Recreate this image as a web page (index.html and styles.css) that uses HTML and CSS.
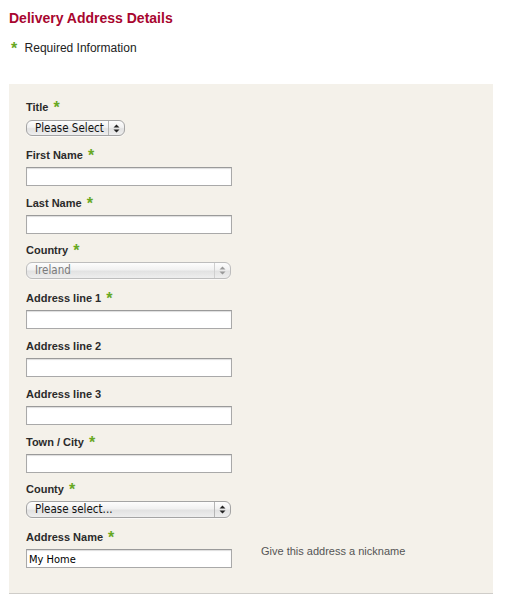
FILE: index.html
```html
<!DOCTYPE html>
<html>
<head>
<meta charset="utf-8">
<link rel="stylesheet" href="styles.css">
</head>
<body>
<div class="page">
  <h1 class="heading">Delivery Address Details</h1>
  <p class="required"><span class="star">*</span> Required Information</p>
  <form class="panel">
    <div class="field">
      <label class="label">Title <span class="star">*</span></label>
      <div class="select select-title">
        <span class="select-text">Please Select</span>
        <span class="select-arrow"><svg width="7" height="9" viewBox="0 0 7 9"><path d="M3.5 0.5 L6.5 3.5 L0.5 3.5 Z M3.5 8.5 L6.5 5.5 L0.5 5.5 Z" fill="#222"/></svg></span>
      </div>
    </div>
    <div class="field">
      <label class="label">First Name <span class="star">*</span></label>
      <input class="input" type="text">
    </div>
    <div class="field">
      <label class="label">Last Name <span class="star">*</span></label>
      <input class="input" type="text">
    </div>
    <div class="field">
      <label class="label">Country <span class="star">*</span></label>
      <div class="select select-wide disabled">
        <span class="select-text">Ireland</span>
        <span class="select-arrow"><svg width="7" height="9" viewBox="0 0 7 9"><path d="M3.5 0.5 L6.5 3.5 L0.5 3.5 Z M3.5 8.5 L6.5 5.5 L0.5 5.5 Z" fill="#999"/></svg></span>
      </div>
    </div>
    <div class="field">
      <label class="label">Address line 1 <span class="star">*</span></label>
      <input class="input" type="text">
    </div>
    <div class="field">
      <label class="label">Address line 2</label>
      <input class="input" type="text">
    </div>
    <div class="field">
      <label class="label">Address line 3</label>
      <input class="input" type="text">
    </div>
    <div class="field">
      <label class="label">Town / City <span class="star">*</span></label>
      <input class="input" type="text">
    </div>
    <div class="field">
      <label class="label">County <span class="star">*</span></label>
      <div class="select select-wide">
        <span class="select-text">Please select...</span>
        <span class="select-arrow"><svg width="7" height="9" viewBox="0 0 7 9"><path d="M3.5 0.5 L6.5 3.5 L0.5 3.5 Z M3.5 8.5 L6.5 5.5 L0.5 5.5 Z" fill="#222"/></svg></span>
      </div>
    </div>
    <div class="field field-row">
      <div class="field-main">
        <label class="label">Address Name <span class="star">*</span></label>
        <input class="input" type="text" value="My Home">
      </div>
      <span class="hint">Give this address a nickname</span>
    </div>
  </form>
</div>
</body>
</html>
```
FILE: styles.css
```css
* { box-sizing: border-box; }
html, body { margin: 0; padding: 0; background: #fff; }
body {
  font-family: "Liberation Sans", Arial, sans-serif;
  color: #222;
}
.page {
  padding: 10px 19px 0 9px;
}
.heading {
  margin: 0;
  font-size: 14px;
  line-height: 16px;
  font-weight: bold;
  color: #a8062f;
}
.required {
  margin: 15px 0 0 2px;
  font-size: 12px;
  line-height: 14px;
  color: #222;
}
.required .star { margin-right: 4px; }
.star {
  color: #67a823;
  font-weight: bold;
  font-size: 16px;
  line-height: 10px;
  vertical-align: -2px;
}
.panel {
  margin-top: 29px;
  background: #f4f1ea;
  border-bottom: 1px solid #cfcdc9;
  padding: 16px 0 15px 17px;
  display: grid;
  grid-auto-rows: 47.8px;
}
.field {
  display: flex;
  flex-direction: column;
  align-items: flex-start;
  gap: 5px;
}
.label {
  font-size: 11px;
  line-height: 14px;
  font-weight: bold;
  color: #2b2b2b;
}
.label .star { margin-left: 2px; }
.input {
  width: 206px;
  height: 19px;
  margin: 0;
  border: 1px solid #a9a9a9;
  border-top-color: #9a9a9a;
  box-shadow: inset 0 1px 1px #ddd;
  background: #fff;
  padding: 1px 2px 0;
  font-family: "DejaVu Sans Condensed", "DejaVu Sans", sans-serif;
  font-stretch: condensed;
  font-size: 11px;
  color: #000;
  outline: none;
}
.select {
  display: flex;
  align-items: stretch;
  height: 17px;
  border: 1px solid #a4a4a4;
  border-radius: 6px;
  background: linear-gradient(#fdfdfd, #f1f1f1 45%, #e2e2e2 55%, #eeeeee);
  font-family: "DejaVu Sans Condensed", "DejaVu Sans", sans-serif;
  font-stretch: condensed;
  font-size: 11.5px;
  color: #111;
  box-shadow: 0 1px 0 rgba(255,255,255,0.6);
}
.select-title {
  width: 99px;
  height: 16px;
  margin-top: 1px;
}
.select-wide { width: 205px; }
.select-text {
  flex: 1;
  padding-left: 8px;
  line-height: 15px;
  white-space: nowrap;
}
.select-arrow {
  width: 16px;
  border-left: 1px solid #b5b5b5;
  display: flex;
  align-items: center;
  justify-content: center;
}
.disabled { color: #7a7a7a; border-color: #bdbdbd; }
.disabled .select-arrow { border-left-color: #cfcfcf; }
.field-row {
  flex-direction: row;
  align-items: flex-start;
  gap: 29px;
}
.field-main {
  display: flex;
  flex-direction: column;
  align-items: flex-start;
  gap: 5px;
}
.hint {
  font-size: 11px;
  line-height: 14px;
  color: #555;
  padding-top: 14px;
}
```
